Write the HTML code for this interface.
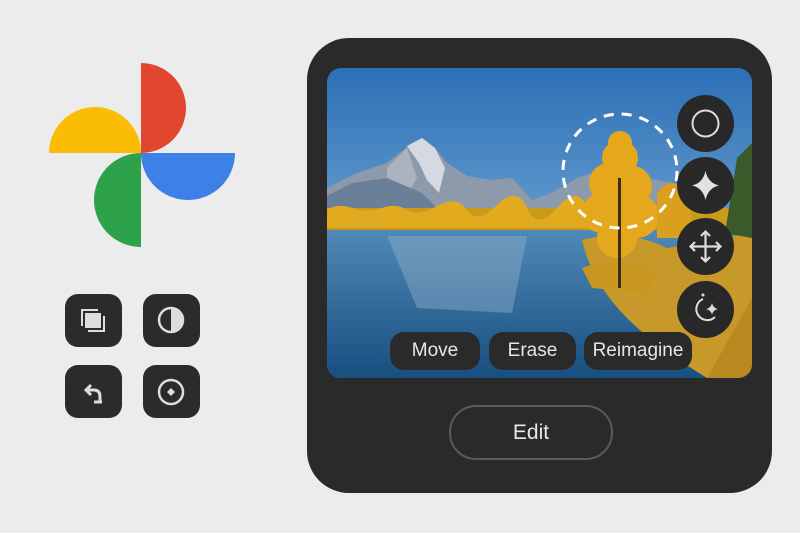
<!DOCTYPE html>
<html><head><style>
body{margin:0;width:800px;height:533px;background:#ececec;overflow:hidden;position:relative;font-family:"Liberation Sans",sans-serif}
.ib{position:absolute;width:57px;height:53px;background:#2b2b2b;border-radius:13px}
.dev{position:absolute;left:307px;top:38px;width:465px;height:455px;background:#2a2a2a;border-radius:42px}
.photo{position:absolute;left:327px;top:68px;width:425px;height:310px;border-radius:14px;overflow:hidden}
.pill{position:absolute;top:332px;height:38px;background:#2a2a2a;color:#e6e6e6;border-radius:14px;font-size:19px;line-height:38px;text-align:center}
.cb{position:absolute;left:677px;width:57px;height:57px;border-radius:50%;background:#282828}
.edit{position:absolute;left:449px;top:405px;width:160px;height:51px;border:2px solid #5a5a5a;border-radius:27px;color:#e8e8e8;font-size:21px;line-height:51px;text-align:center}
</style></head><body>
<svg style="position:absolute;left:0;top:0" width="260" height="260">
<path d="M49 153 A46 46 0 0 1 141 153 Z" fill="#fbbc04"/>
<path d="M141 63 A45 45 0 0 1 141 153 Z" fill="#e2462f"/>
<path d="M235 153 A47 47 0 0 1 141 153 Z" fill="#3d80e6"/>
<path d="M141 247 A47 47 0 0 1 141 153 Z" fill="#2ea24a"/>
</svg>
<div class="ib" style="left:65px;top:294px"><svg width="57" height="53"><rect x="20" y="19" width="16" height="15" fill="#ddd"/><path d="M17 32V16H33" stroke="#ddd" stroke-width="2" fill="none"/><path d="M39 22V37H23" stroke="#ddd" stroke-width="2" fill="none"/></svg></div>
<div class="ib" style="left:143px;top:294px"><svg width="57" height="53"><circle cx="28" cy="26" r="12" stroke="#ddd" stroke-width="2.5" fill="none"/><path d="M28 14A12 12 0 0 1 28 38Z" fill="#ddd"/></svg></div>
<div class="ib" style="left:65px;top:365px"><svg width="57" height="53"><path d="M26 20L21 25L26 30" stroke="#ddd" stroke-width="3" fill="none"/><path d="M22 25H29Q35 25 35 32V37M29 37H37" stroke="#ddd" stroke-width="3" fill="none"/></svg></div>
<div class="ib" style="left:143px;top:365px"><svg width="57" height="53"><circle cx="28" cy="27" r="12" stroke="#ddd" stroke-width="2.5" fill="none"/><path d="M28 23L32 27L28 31L24 27Z" fill="#ddd"/></svg></div>
<div class="dev"></div>
<div class="photo"><svg width="425" height="310">
<defs><linearGradient id="sky" x1="0" y1="0" x2="0" y2="1"><stop offset="0" stop-color="#2b6fb5"/><stop offset="1" stop-color="#9cc6e6"/></linearGradient>
<linearGradient id="wat" x1="0" y1="0" x2="0" y2="1"><stop offset="0" stop-color="#4f89b6"/><stop offset="1" stop-color="#174f80"/></linearGradient></defs>
<rect width="425" height="310" fill="url(#sky)"/>
<path d="M0 120L30 105L60 95L85 75L95 70L108 80L120 95L140 108L165 112L185 110L205 132L225 125L250 110L265 105L290 118L320 110L345 115L345 150L0 150Z" fill="#8d9aab"/>
<path d="M80 78L95 70L108 80L118 100L112 125L100 112L92 95Z" fill="#d5dae0"/>
<path d="M60 100L80 80L90 110L75 135L60 125Z" fill="#aab3bf"/>
<path d="M0 150V128L25 115L60 110L95 125L120 150Z" fill="#6a7f98"/>
<rect x="0" y="140" width="425" height="22" fill="#c99a1c"/>
<path d="M0 142Q10 135 25 140T55 140T80 142T110 138T140 142T170 137T200 140T230 140T260 138L270 160L0 160Z" fill="#e2ab1f"/>
<rect x="0" y="162" width="425" height="148" fill="url(#wat)"/>
<path d="M60 168L200 168L185 245L90 240Z" fill="#9ab7cc" opacity=".4"/>
<path d="M255 172Q300 160 340 180L425 165L425 310L380 310Q330 280 300 250Q265 215 255 172Z" fill="#c7982a"/>
<path d="M380 310L425 230L425 310Z" fill="#b8891f"/>
<path d="M398 165L410 90L425 75L425 170Z" fill="#3b5a2a"/>
<g fill="#e5a81c"><circle cx="293" cy="90" r="18"/><circle cx="282" cy="115" r="20"/><circle cx="305" cy="118" r="20"/><circle cx="275" cy="145" r="20"/><circle cx="310" cy="148" r="22"/><circle cx="290" cy="170" r="20"/><circle cx="293" cy="75" r="12"/></g>
<path d="M330 125Q345 105 360 125L368 170L330 170Z" fill="#d99f1d"/>
<path d="M255 200Q290 185 330 205L320 225L265 220Z" fill="#c9961f"/>
<rect x="291" y="110" width="3" height="110" fill="#3b2d18"/>
<circle cx="293" cy="103" r="57" fill="none" stroke="#fff" stroke-width="3" stroke-dasharray="10 8"/>
</svg></div>
<div class="cb" style="top:95px"><svg width="57" height="57"><circle cx="28.5" cy="28.5" r="13" stroke="#ddd" stroke-width="2" fill="none"/></svg></div>
<div class="cb" style="top:157px"><svg width="57" height="57"><path d="M28.5 14Q31 26 42 28.5Q31 31 28.5 43Q26 31 15 28.5Q26 26 28.5 14Z" fill="#e2e2e2"/></svg></div>
<div class="cb" style="top:218px"><svg width="57" height="57"><path d="M28.5 14V43M14 28.5H43M24 18L28.5 13.5L33 18M24 39L28.5 43.5L33 39M18 24L13.5 28.5L18 33M39 24L43.5 28.5L39 33" stroke="#ddd" stroke-width="2.2" fill="none"/></svg></div>
<div class="cb" style="top:281px"><svg width="57" height="57"><path d="M26 18A11 11 0 1 0 38 36" stroke="#ddd" stroke-width="2" fill="none"/><circle cx="26" cy="14" r="1.5" fill="#ddd"/><path d="M35 22Q36 27 41 28Q36 29 35 34Q34 29 29 28Q34 27 35 22Z" fill="#ddd"/></svg></div>
<div class="pill" style="left:390px;width:90px">Move</div>
<div class="pill" style="left:489px;width:87px">Erase</div>
<div class="pill" style="left:584px;width:108px">Reimagine</div>
<div class="edit">Edit</div>
</body></html>
